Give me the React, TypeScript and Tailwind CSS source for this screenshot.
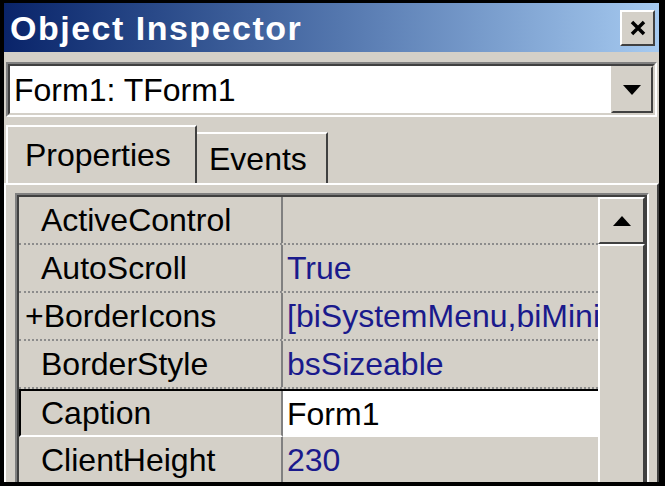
import React from "react";

type Row = { name: string; value: string; selected?: boolean };

const rows: Row[] = [
  { name: " ActiveControl", value: "" },
  { name: " AutoScroll", value: "True" },
  { name: "+BorderIcons", value: "[biSystemMenu,biMinimize,biMaximize]" },
  { name: " BorderStyle", value: "bsSizeable" },
  { name: " Caption", value: "Form1", selected: true },
  { name: " ClientHeight", value: "230" },
];

function PropRow({ row }: { row: Row }) {
  const plus = row.name.startsWith("+");
  if (row.selected) {
    return (
      <div className="flex h-[48px] shrink-0 border-t-2 border-black">
        <div className="flex w-[264px] shrink-0 items-center border-l-2 border-b-2 border-l-black border-b-white border-r-2 border-r-[#808080] pl-[20px]">
          {row.name.trim()}
        </div>
        <div className="flex min-w-0 flex-1 items-center overflow-hidden whitespace-nowrap bg-white pl-[4px] text-black">
          {row.value}
        </div>
      </div>
    );
  }
  return (
    <div className="flex h-[48px] shrink-0 border-b-2 border-dotted border-[#8c8c8c]">
      <div
        className={
          plus
            ? "flex w-[264px] shrink-0 items-center border-r-2 border-[#808080] pl-[6px]"
            : "flex w-[264px] shrink-0 items-center border-r-2 border-[#808080] pl-[22px]"
        }
      >
        {row.name.trim()}
      </div>
      <div className="flex min-w-0 flex-1 items-center overflow-hidden whitespace-nowrap pl-[4px] text-[#1a1a8c]">
        {row.value}
      </div>
    </div>
  );
}

export default function App() {
  return (
    <div className="h-[486px] w-[665px] overflow-hidden bg-black pb-[4px] pl-[4px] pr-[6px] pt-[3px] font-['Liberation_Sans',Arial,sans-serif] text-[32px] leading-none text-black">
      <div className="flex h-full flex-col overflow-hidden bg-[#d4d0c8]">
        {/* title bar */}
        <div className="flex h-[49px] shrink-0 items-center justify-between bg-gradient-to-r from-[#0a246a] to-[#a6caf0] pl-[6px] pr-[4px]">
          <span className="font-bold tracking-[1.5px] text-[34px] text-white">Object Inspector</span>
          <div className="flex h-[36px] w-[35px] items-center justify-center border-2 border-t-white border-l-white border-r-[#404040] border-b-[#404040] bg-[#d4d0c8]">
            <svg width="18" height="18" viewBox="0 0 18 18">
              <path d="M3 3 L15 15 M15 3 L3 15" stroke="black" strokeWidth="3.5" />
            </svg>
          </div>
        </div>

        {/* object combo */}
        <div className="mx-[2px] mt-[10px] flex h-[55px] shrink-0 border-2 border-t-[#808080] border-l-[#808080] border-r-white border-b-white">
          <div className="flex flex-1 border-2 border-t-[#404040] border-l-[#404040] border-r-[#d4d0c8] border-b-[#d4d0c8] bg-white">
            <div className="flex flex-1 items-center pl-[4px]">Form1: TForm1</div>
            <div className="flex w-[42px] items-center justify-center border-2 border-t-[#d4d0c8] border-l-[#d4d0c8] border-r-[#404040] border-b-[#404040] bg-[#d4d0c8]">
              <svg width="18" height="10" viewBox="0 0 18 10">
                <path d="M0 0 H18 L9 10 Z" fill="black" />
              </svg>
            </div>
          </div>
        </div>

        {/* tabs */}
        <div className="mt-[9px] flex h-[57px] shrink-0 items-end pl-[2px]">
          <div className="relative z-10 flex h-[58px] w-[191px] items-center border-l-2 border-t-2 border-r-2 border-l-white border-t-white border-r-[#404040] bg-[#d4d0c8] pl-[17px]">
            Properties
          </div>
          <div className="flex h-[51px] w-[131px] items-center border-t-2 border-r-2 border-t-white border-r-[#404040] pl-[12px]">
            Events
          </div>
        </div>

        {/* tab page */}
        <div className="flex min-h-0 flex-1 flex-col overflow-hidden border-l-2 border-t-2 border-r-2 border-l-white border-t-white border-r-[#404040] pl-[9px] pr-[8px] pt-[8px]">
          <div className="flex h-[310px] shrink-0 border-2 border-t-[#808080] border-l-[#808080] border-r-white border-b-white">
            <div className="flex min-w-0 flex-1 border-2 border-[#404040]">
              <div className="flex min-w-0 flex-1 flex-col overflow-hidden">
                {rows.map((r) => (
                  <PropRow key={r.name} row={r} />
                ))}
              </div>
              <div className="flex w-[47px] shrink-0 flex-col bg-[#e6e3de]">
                <div className="flex h-[47px] shrink-0 items-center justify-center border-2 border-t-white border-l-white border-r-[#404040] border-b-[#404040] bg-[#d4d0c8]">
                  <svg width="18" height="10" viewBox="0 0 18 10">
                    <path d="M0 10 H18 L9 0 Z" fill="black" />
                  </svg>
                </div>
                <div className="flex-1 border-2 border-t-white border-l-white border-r-[#404040] border-b-[#404040] bg-[#d4d0c8]" />
              </div>
            </div>
          </div>
        </div>
      </div>
    </div>
  );
}
